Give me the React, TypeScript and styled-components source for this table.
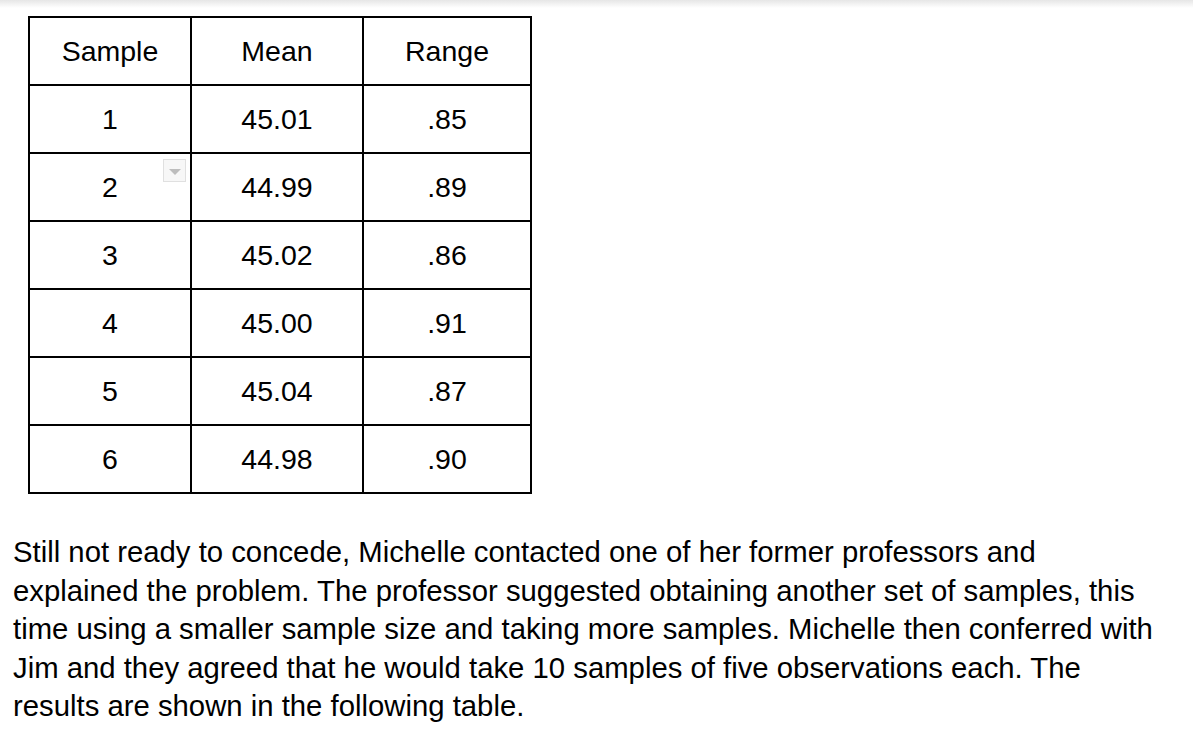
import styled, { createGlobalStyle } from "styled-components";

const rows = [
  { sample: "1", mean: "45.01", range: ".85" },
  { sample: "2", mean: "44.99", range: ".89", menu: true },
  { sample: "3", mean: "45.02", range: ".86" },
  { sample: "4", mean: "45.00", range: ".91" },
  { sample: "5", mean: "45.04", range: ".87" },
  { sample: "6", mean: "44.98", range: ".90" },
];

const lines = [
  "Still not ready to concede, Michelle contacted one of her former professors and",
  "explained the problem. The professor suggested obtaining another set of samples, this",
  "time using a smaller sample size and taking more samples. Michelle then conferred with",
  "Jim and they agreed that he would take 10 samples of five observations each. The",
  "results are shown in the following table.",
];

const App = () => {
  return (
    <Page>
      <GlobalStyle />
      <TopShade />
      <Content>
        <DataTable>
          <thead>
            <tr>
              <Cell as="th" $w={160}>Sample</Cell>
              <Cell as="th" $w={170}>Mean</Cell>
              <Cell as="th" $w={166}>Range</Cell>
            </tr>
          </thead>
          <tbody>
            {rows.map((r) => (
              <tr key={r.sample}>
                <Cell $w={160}>
                  {r.sample}
                  {r.menu && (
                    <MenuToggle>
                      <svg width="12" height="6" viewBox="0 0 12 6">
                        <path d="M0 0 L12 0 L6 6 Z" fill="#bdbdbd" />
                      </svg>
                    </MenuToggle>
                  )}
                </Cell>
                <Cell $w={170}>{r.mean}</Cell>
                <Cell $w={166}>{r.range}</Cell>
              </tr>
            ))}
          </tbody>
        </DataTable>

        <Paragraph>
          {lines.map((l, i) => (
            <span key={i}>
              {l}
              {i < lines.length - 1 && <br />}
            </span>
          ))}
        </Paragraph>
      </Content>
    </Page>
  );
};

const GlobalStyle = createGlobalStyle`
  html, body {
    margin: 0;
    padding: 0;
    background: #fff;
  }
  body {
    font-family: "Liberation Sans", Arial, sans-serif;
    color: #000;
  }
`;

const Page = styled.div`
  width: 1193px;
  height: 730px;
  overflow: hidden;
  background: #fff;
`;

const TopShade = styled.div`
  height: 8px;
  background: linear-gradient(to bottom, #e6e6e6, #ffffff);
`;

const Content = styled.div`
  padding: 8px 0 0 0;
`;

const DataTable = styled.table`
  margin-left: 28px;
  border-collapse: separate;
  border-spacing: 0;
  border-top: 2px solid #000;
  border-left: 2px solid #000;
  font-size: 28.5px;
`;

const Cell = styled.td<{ $w: number }>`
  position: relative;
  width: ${(p) => p.$w}px;
  min-width: ${(p) => p.$w}px;
  box-sizing: content-box;
  height: 49px;
  padding: 17px 0 0 0;
  vertical-align: top;
  text-align: center;
  font-weight: normal;
  line-height: 32px;
  border-right: 2px solid #000;
  border-bottom: 2px solid #000;
`;

const MenuToggle = styled.span`
  position: absolute;
  top: 5px;
  right: 4px;
  width: 23px;
  height: 23px;
  border: 1px solid #e0e0e0;
  background: #f7f7f7;
  display: flex;
  align-items: flex-start;
  justify-content: center;
  padding-top: 9px;
  box-sizing: border-box;
`;

const Paragraph = styled.p`
  margin: 39px 0 0 0;
  padding-left: 13px;
  font-size: 29.3px;
  line-height: 38.5px;
  white-space: nowrap;
`;

export default App;
